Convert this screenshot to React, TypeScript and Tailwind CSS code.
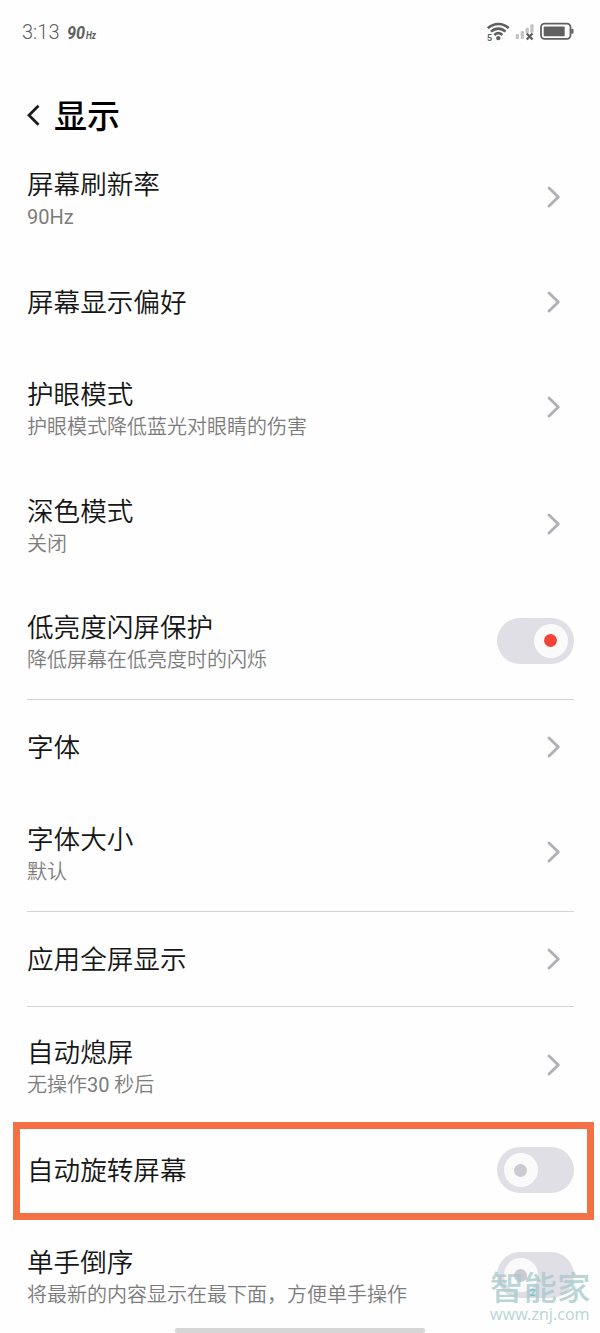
import * as React from "react"
import { cva } from "class-variance-authority"
import clsx from "clsx"

interface SettingItem {
  title: string
  hint?: string
  control: "link" | "on" | "off"
  highlighted?: boolean
}

const groups: SettingItem[][] = [
  [
    { title: "屏幕刷新率", hint: "90Hz", control: "link" },
    { title: "屏幕显示偏好", control: "link" },
    { title: "护眼模式", hint: "护眼模式降低蓝光对眼睛的伤害", control: "link" },
    { title: "深色模式", hint: "关闭", control: "link" },
    { title: "低亮度闪屏保护", hint: "降低屏幕在低亮度时的闪烁", control: "on" },
  ],
  [
    { title: "字体", control: "link" },
    { title: "字体大小", hint: "默认", control: "link" },
  ],
  [{ title: "应用全屏显示", control: "link" }],
  [
    { title: "自动熄屏", hint: "无操作30 秒后", control: "link" },
    { title: "自动旋转屏幕", control: "off", highlighted: true },
    { title: "单手倒序", hint: "将最新的内容显示在最下面，方便单手操作", control: "off" },
  ],
]

const row = cva("relative flex items-center justify-between", {
  variants: {
    size: {
      single: "h-[93.3px]",
      double: "h-[116.7px]",
    },
  },
})

// digits and latin letters need a heavier cut than the CJK glyphs
function Hint({ text }: { text: string }) {
  return (
    <span className="text-[20px] leading-[28px] font-[350] text-[#7c7c7c]">
      {text.split(/([0-9A-Za-z]+)/).map((part, i) =>
        i % 2 === 1 ? <span key={i} className="font-normal">{part}</span> : part,
      )}
    </span>
  )
}

function StatusBar() {
  return (
    <div className="flex h-16 items-center justify-between pl-[22px] pr-[26px] text-[#606060]">
      <div className="flex items-baseline font-[Roboto]">
        <span className="text-[20px] leading-none font-[350]">3:13</span>
        <span className="ml-[8px] inline-block w-[19px] origin-left scale-x-[0.86] text-[19px] leading-none font-bold italic">90</span>
        <span className="inline-block origin-left scale-x-[0.85] text-[10px] leading-none font-bold italic">Hz</span>
      </div>
      <div className="flex items-center">
        <svg width="24" height="20" viewBox="0 0 24 20" fill="none" stroke="currentColor">
          <path d="M1.800 6.200C8 0.500 17 0.500 22.700 6.200" strokeWidth="2.600" />
          <path d="M5 9.600C9.400 5.600 15.300 5.600 19.500 9.600" strokeWidth="2.600" />
          <path d="M8.300 13C11 10.600 13.800 10.600 16.400 13" strokeWidth="2.600" />
          <circle cx="12.300" cy="16.100" r="2.200" fill="currentColor" stroke="none" />
          <text x="1" y="18.600" fontSize="9" fontWeight="700" fontFamily="Roboto" fill="currentColor" stroke="none">5</text>
        </svg>
        <svg className="ml-[5px]" width="20" height="20" viewBox="0 0 20 20">
          <g fill="#c4c4c4">
            <rect x="0.700" y="12" width="3.300" height="5" rx="1" />
            <rect x="5.700" y="9" width="3.300" height="8" rx="1" />
            <rect x="10.500" y="5.700" width="3.300" height="5.500" rx="1" />
            <rect x="15.300" y="2.200" width="3.300" height="8.500" rx="1" />
          </g>
          <path d="M11.700 11.500 17.500 17.500M17.500 11.500 11.700 17.500" stroke="currentColor" strokeWidth="2.300" />
        </svg>
        <svg className="ml-[5px]" width="34" height="20" viewBox="0 0 34 20">
          <rect x="1" y="1.700" width="29.500" height="15.200" rx="3.600" fill="none" stroke="currentColor" strokeWidth="1.800" />
          <rect x="3.700" y="4.500" width="21" height="9.700" rx="1" fill="currentColor" />
          <rect x="31.200" y="6.800" width="2.300" height="5" rx="1" fill="currentColor" />
        </svg>
      </div>
    </div>
  )
}

function Chevron() {
  return (
    <svg className="mr-[12px]" width="16" height="24" viewBox="0 0 16 24" fill="none">
      <path d="M3 3 12.300 12 3 21" stroke="#b1b0b8" strokeWidth="2.900" strokeLinecap="round" strokeLinejoin="round" />
    </svg>
  )
}

function Toggle({ on }: { on: boolean }) {
  return (
    <div
      className={clsx(
        "flex h-[46px] w-[77px] items-center rounded-full bg-[#e0dfe6] px-[6.500px]",
        on ? "justify-end" : "justify-start",
      )}
    >
      <div className="flex size-[34px] items-center justify-center rounded-full bg-[#fafafa]">
        <div className={clsx("size-[13px] rounded-full", on ? "bg-[#f44336]" : "bg-[#cbcad1]")} />
      </div>
    </div>
  )
}

function SettingRow({ item }: { item: SettingItem }) {
  return (
    <div className={row({ size: item.hint ? "double" : "single" })}>
      <div className={clsx("flex flex-col", item.hint ? "pt-[3px]" : "pt-[2px]")}>
        <span className="text-[26.6px] leading-[36px] font-[350] text-[#161616]">{item.title}</span>
        {item.hint && <Hint text={item.hint} />}
      </div>
      {item.control === "link" ? <Chevron /> : <Toggle on={item.control === "on"} />}
      {item.highlighted && (
        <div className="pointer-events-none absolute -top-[2px] -right-[20px] -bottom-[3px] -left-[14px] border-[7px] border-[#f57145]" />
      )}
    </div>
  )
}

export default function App() {
  return (
    <div className="relative h-[1333px] w-[600px] overflow-hidden bg-[#fefefe] font-['Roboto','Noto_Sans_CJK_SC',sans-serif]">
      <StatusBar />
      <header className="flex h-[75px] items-center pb-[3px] pl-[26px] pt-[30px]">
        <svg width="16" height="24" viewBox="0 0 16 24" fill="none">
          <path d="M12.500 2.800 3 12.300l9.500 9.500" stroke="#1c1c1c" strokeWidth="2.800" />
        </svg>
        <h1 className="ml-[12px] pt-[2px] text-[33px] leading-none font-medium text-black">显示</h1>
      </header>
      <main className="pr-[26px] pl-[27px]">
        {groups.map((items, i) => (
          <React.Fragment key={items[0].title}>
            {i > 0 && <hr className="my-[0.300px] border-t border-[#d4d4d4]" />}
            {items.map((item) => (
              <SettingRow key={item.title} item={item} />
            ))}
          </React.Fragment>
        ))}
      </main>

      {/* gesture bar */}
      <div className="absolute bottom-0 left-[175px] h-[5px] w-[250px] rounded-full bg-[#d6d6d6]" />

      {/* site stamp */}
      <div className="absolute top-[1272px] left-[490px] w-[102px] text-[#a5c8ca]/75">
        <div className="text-[33.5px] leading-[34px] font-medium whitespace-nowrap">智能家</div>
        <div className="text-[16px] leading-[17px] font-['Noto_Sans'] whitespace-nowrap">www.znj.com</div>
        <span className="absolute top-[17px] left-[40px] text-[9px] leading-none text-[#5fc3cf]">2</span>
      </div>
    </div>
  )
}
